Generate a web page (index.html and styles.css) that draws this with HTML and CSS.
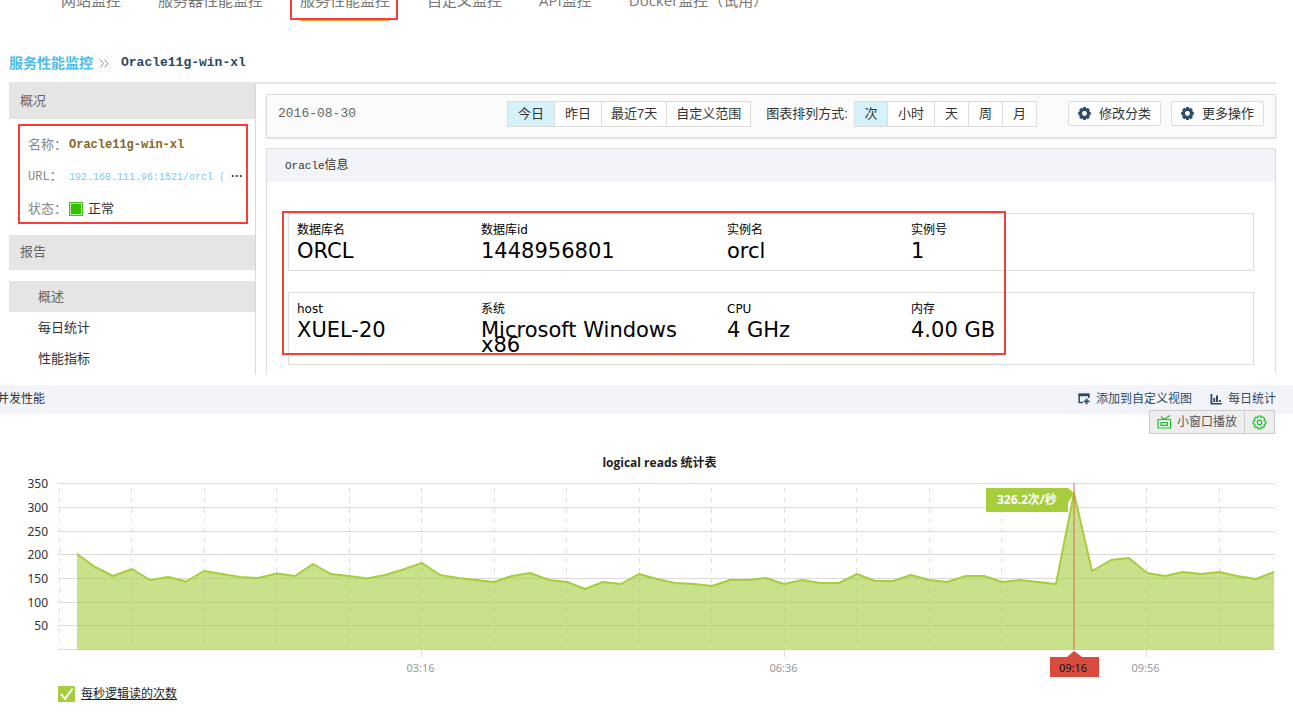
FILE: index.html
```
<!DOCTYPE html>
<html lang="zh-CN">
<head>
<meta charset="utf-8">
<title>服务性能监控</title>
<link rel="stylesheet" href="styles.css">
</head>
<body>
<svg class="defs" width="0" height="0" aria-hidden="true">
  <symbol id="gear" viewBox="0 0 12 12">
    <path fill-rule="evenodd" d="M4.8 0h2.4l.4 1.600 1.500-.8 1.900 1.900-.8 1.500 1.600.5v2.600l-1.600.5.8 1.500-1.900 1.900-1.500-.8-.4 1.600H4.800l-.4-1.600-1.500.8L1 9.300l.8-1.500L.2 7.300V4.700l1.600-.5L1 2.700 2.900.8l1.500.8zM6 3.700a2.300 2.300 0 1 0 0 4.600 2.300 2.300 0 0 0 0-4.600z"/>
  </symbol>
</svg>
<header>
  <nav class="topnav">
    <a href="#">网站监控</a>
    <a href="#">服务器性能监控</a>
    <a href="#" class="current">服务性能监控</a>
    <a href="#">自定义监控</a>
    <a href="#">API监控</a>
    <a href="#">Docker监控（试用）</a>
  </nav>
  <div class="crumbs">
    <a href="#">服务性能监控</a>
    <svg width="10" height="9" viewBox="0 0 10 9"><path d="M1 .5l3.500 4L1 8.500M5.500.5l3.500 4-3.500 4" fill="none" stroke="#7d93ab"/></svg>
    <h1 class="mono">Oracle11g-win-xl</h1>
  </div>
</header>

<div class="layout">
  <aside class="side">
    <h2>概况</h2>
    <dl class="info">
      <dt>名称：</dt><dd class="name mono">Oracle11g-win-xl</dd>
      <dt><span class="mono">URL</span>：</dt><dd class="url mono"><a href="#">192.168.111.96:1521/orcl (</a><b>···</b></dd>
      <dt>状态：</dt><dd class="state"><i></i>正常</dd>
    </dl>
    <h2>报告</h2>
    <nav class="menu">
      <a href="#" class="on">概述</a>
      <a href="#">每日统计</a>
      <a href="#">性能指标</a>
    </nav>
  </aside>

  <main class="main">
    <div class="toolbar">
      <span class="date mono">2016-08-30</span>
      <div class="seg range">
        <button class="on">今日</button><button>昨日</button><button>最近7天</button><button>自定义范围</button>
      </div>
      <span class="seg-label">图表排列方式:</span>
      <div class="seg unit">
        <button class="on">次</button><button>小时</button><button>天</button><button>周</button><button>月</button>
      </div>
      <div class="actions">
        <button><svg width="13" height="13"><use href="#gear"/></svg>修改分类</button>
        <button><svg width="13" height="13"><use href="#gear"/></svg>更多操作</button>
      </div>
    </div>
    <section class="panel">
      <h2><span class="mono">Oracle</span>信息</h2>
      <div class="cards">
        <dl class="card">
          <div><dt>数据库名</dt><dd>ORCL</dd></div>
          <div><dt>数据库id</dt><dd>1448956801</dd></div>
          <div><dt>实例名</dt><dd>orcl</dd></div>
          <div><dt>实例号</dt><dd>1</dd></div>
        </dl>
        <dl class="card">
          <div><dt>host</dt><dd>XUEL-20</dd></div>
          <div><dt>系统</dt><dd>Microsoft Windows x86</dd></div>
          <div><dt>CPU</dt><dd>4 GHz</dd></div>
          <div><dt>内存</dt><dd>4.00 GB</dd></div>
        </dl>
      </div>
    </section>
  </main>
</div>

<section class="perf">
  <div class="bar">
    <h2>并发性能</h2>
    <div class="links">
      <a href="#"><svg width="12" height="12" viewBox="0 0 12 12"><path d="M5 9.500H1.200V1.500h9.600V5" fill="none" stroke="currentColor" stroke-width="1.500"/><path d="M.5.5h11v2.800H.5zM7.700 5.500h1.800v2h2v1.800h-2v2H7.700v-2h-2V7.500h2z" fill="currentColor"/></svg>添加到自定义视图</a>
      <a href="#"><svg width="12" height="12" viewBox="0 0 12 12"><path d="M.5 1h1.800v9h9.500v1.500H.5zM3.300 5h1.900v4H3.300zM6 2.500h2v6.500H6zM8.900 7h1.900v2H8.900z" fill="currentColor"/></svg>每日统计</a>
    </div>
  </div>
  <div class="play">
    <button><svg width="15" height="14" viewBox="0 0 15 14"><path d="M1 4.500h12.500v8.500H1zM4 7.500h6.500v2.800H4zM4 1.500l3 3 6-4" fill="none" stroke="#1fc32f" stroke-width="1.200"/></svg>小窗口播放</button>
    <button aria-label="设置"><svg width="15" height="15" viewBox="0 0 15 15"><g fill="none" stroke="#1fc32f" stroke-width="1.200"><path d="M6.200 1h2.600l.5 1.700 1.600-.8 1.900 1.900-.8 1.600 1.800.7v2.600l-1.800.6.8 1.700-1.900 1.800-1.600-.8-.5 1.800H6.200l-.6-1.800-1.600.8L2.200 11l.8-1.700-1.800-.6V6.100L3 5.400l-.8-1.600L4 1.900l1.600.8z"/><circle cx="7.500" cy="7.400" r="2.200"/></g></svg></button>
  </div>
  <h3>logical reads 统计表</h3>
  <svg class="chart" viewBox="0 475 1293 205" role="img" aria-label="logical reads 统计表">
    <g id="grid"></g>
    <path id="area"/>
    <polyline id="line"/>
    <path class="cursor" d="M1074 483v167"/>
    <path class="tip" d="M986 488h82l6 5-6 10v9h-82z"/>
    <text class="tip-text" x="997" y="504">326.2次/秒</text>
    <path class="flag" d="M1050 657h17l7-6 8 6h17v20h-49z"/>
    <text class="flag-text" x="1073" y="672">09:16</text>
  </svg>
  <label class="legend"><input type="checkbox" checked><span>每秒逻辑读的次数</span></label>
</section>
<script src="chart.js"></script>
</body>
</html>
```
FILE: styles.css
```
* { box-sizing: border-box; }
body {
  margin: 0;
  overflow-x: hidden;
  background: #fff;
  color: #333;
  font: 13px/20px "Liberation Sans", "Noto Sans CJK SC", sans-serif;
}
h1, h2, h3, dl, dd { margin: 0; }
h1, h2 { font-weight: normal; }
a { color: inherit; text-decoration: none; }
button { font: inherit; color: inherit; margin: 0; cursor: pointer; }
svg { flex: none; }
.defs { position: absolute; }
.mono { font-family: "Liberation Mono", "Noto Sans CJK SC", monospace; }

.topnav {
  display: flex;
  gap: 37px;
  height: 20px;
  padding-left: 61px;
  color: #777;
  font: 15px/24px "Open Sans", "Noto Sans CJK SC", sans-serif;
  white-space: nowrap;
}
.topnav a { height: 33px; margin-top: -12px; }
.topnav .current { position: relative; border-bottom: 2px solid #f7a73e; }
.topnav .current::after {
  content: "";
  position: absolute;
  inset: 0 -8px -1px -10px;
  border: 2px solid #f83c3c;
}

.crumbs {
  display: flex;
  align-items: center;
  gap: 6px;
  height: 62px;
  padding: 24px 9px 0;
}
.crumbs a { color: #4cbde8; font-size: 14px; font-weight: bold; }
.crumbs h1 { margin-left: 6px; color: #2b4665; font-size: 13px; font-weight: bold; }

.layout {
  display: flex;
  margin: 0 17px 0 9px;
  border-top: 2px solid #e6e6e6;
}
.side { width: 247px; border-right: 1px solid #d8d8d8; flex: none; }
.side h2 { padding: 7px 11px 8px; background: #e5e5e5; color: #666; font-size: 13px; }
.info {
  display: grid;
  grid-template-columns: 41px 1fr;
  row-gap: 11px;
  margin: 5px 7px 11px 9px;
  padding: 9px 0 3px 8px;
  border: 2px solid #f83c3c;
  white-space: nowrap;
}
.info dt { color: #888; font-size: 13px; }
.info dt .mono { font-size: 12px; }
.name { color: #866422; font-size: 12px; font-weight: bold; }
.url { color: #7cc9ec; font-size: 10px; }
.url b { margin-left: 6px; color: #333; font-size: 12px; font-family: "Liberation Sans", sans-serif; }
.state { display: flex; align-items: center; gap: 5px; }
.state i {
  width: 14px;
  height: 14px;
  border: 1px solid #3ec415;
  background: #36bf00;
  box-shadow: inset 0 0 0 1px #b9efa6;
}
.menu { padding-top: 11px; }
.menu a { display: block; padding: 6px 29px 5px; }
.menu .on { background: #e5e5e5; color: #666; }

.main { flex: 1; min-width: 0; padding: 10px 0 0 10px; }
.toolbar {
  display: flex;
  align-items: flex-start;
  height: 44px;
  padding: 6px 11px;
  border: 1px solid #dcdcdc;
  background: #fbfbfb;
  box-shadow: 0 1px 2px #ddd;
  white-space: nowrap;
}
.date { margin-right: auto; padding-top: 3px; color: #666; }
.seg { display: flex; }
.seg button {
  height: 26px;
  padding: 0;
  border: 1px solid #dcdcdc;
  border-left-width: 0;
  background: #fff;
  flex: none;
}
.seg button:first-child { border-left-width: 1px; }
.seg .on { background: #d5f1fa; }
.range button { padding: 0 9px; }
.range button:nth-child(-n+2) { padding: 0 10px; }
.unit button { width: 34px; }
.unit button:nth-child(2) { width: 47px; }
.seg-label { padding: 3px 6px 0 15px; }
.actions { display: flex; gap: 10px; margin-left: 31px; }
.actions button {
  display: flex;
  align-items: center;
  gap: 8px;
  height: 25px;
  padding: 0 9px;
  border: 1px solid #dcdcdc;
  border-radius: 2px;
  background: #fff;
}
.actions svg { fill: #2c4a66; }

.panel { margin-top: 10px; border: 1px solid #dcdcdc; border-bottom: 0; }
.panel h2 { padding: 6px 18px; background: #f3f4f9; font-size: 12px; }
.panel .mono { font-size: 11px; }
.cards {
  position: relative;
  display: grid;
  gap: 21px;
  padding: 31px 21px 9px;
  color: #000;
  font-family: "DejaVu Sans", "Noto Sans CJK SC", sans-serif;
}
.cards::after {
  content: "";
  position: absolute;
  inset: 29px 269px 19px 15px;
  border: 2px solid #f83c3c;
  pointer-events: none;
}
.card {
  display: grid;
  grid-template-columns: 184px 246px 184px 1fr;
  padding: 6px 8px 11px;
  border: 1px solid #ddd;
}
.card dt { font-size: 12px; }
.card dd { padding: 4px 30px 0 0; font-size: 21px; line-height: 15px; }
.card div:last-child dd { padding-right: 0; }

.perf { margin-top: 11px; font-size: 12px; }
.bar {
  display: flex;
  justify-content: space-between;
  padding: 4px 17px 5px 0;
  background: #f3f4f9;
}
.bar h2 { margin-left: -3px; font-size: 12px; }
.links { display: flex; gap: 18px; color: #2c4a66; }
.links a { display: flex; align-items: center; gap: 6px; }
.play {
  position: relative;
  display: flex;
  justify-content: flex-end;
  margin: -4px 18px 0 0;
}
.play button {
  display: flex;
  align-items: center;
  gap: 5px;
  height: 24px;
  padding: 0 7px;
  border: 1px solid #ccc;
  background: #eee;
  color: #555;
}
.play button + button { border-left-width: 0; }
.perf h3 {
  margin: 19px 0 2px;
  padding-left: 26px;
  color: #222;
  font: bold 12px/20px "Open Sans", "Noto Sans CJK SC", sans-serif;
  text-align: center;
}
.chart {
  display: block;
  width: 100%;
  font-family: "Noto Sans", "Noto Sans CJK SC", sans-serif;
  font-size: 12px;
}
.row { stroke: #d9d9d9; }
.col { stroke: #e0e0e0; stroke-dasharray: 5 5; }
.tick { stroke: #ddd; }
.y-label { fill: #333; text-anchor: end; }
.x-label { fill: #999; font-size: 11px; text-anchor: middle; }
#area { fill: #a6cd3d; fill-opacity: .6; }
#line { fill: none; stroke: #a6cd3d; stroke-width: 2; stroke-linejoin: round; }
.cursor { stroke: #e0604c; stroke-opacity: .45; stroke-width: 2; }
.tip { fill: #a6cd3d; }
.tip-text { fill: #fff; font-weight: bold; }
.flag { fill: #d94c3d; }
.flag-text { fill: #111; font-size: 11px; text-anchor: middle; }
.legend {
  display: inline-flex;
  align-items: center;
  gap: 6px;
  margin: 4px 0 8px 58px;
  color: #222;
  text-decoration: underline;
}
.legend input {
  appearance: none;
  width: 17px;
  height: 16px;
  margin: 0;
  border-radius: 1px;
  background: #a6cd3d;
}
.legend input:checked::before {
  content: "";
  display: block;
  height: 16px;
  background: #fff;
  clip-path: polygon(12% 52%, 22% 46%, 40% 70%, 82% 12%, 90% 18%, 42% 90%);
}
```
FILE: chart.js
```
const left = 59, step = 18.13, right = 1275, base = 649.5;
const points = [
  554, 567, 576, 569, 580, 577, 581.5, 571, 574, 577, 578, 573.5, 576, 564, 574,
  576, 578.5, 575, 569.5, 563, 575, 578, 580, 582, 576, 573, 580, 582, 589, 582,
  584, 574, 579, 583, 584, 586, 580, 580, 578, 584, 580, 583, 583, 574, 581, 581,
  575, 580, 582, 576, 576, 582, 580, 582, 584, 493, 571, 560, 558, 573, 576, 572,
  574, 572, 576, 579, 572
];

let grid = "";
for (let i = 0; i <= 7; i++) {
  const y = Math.floor(base - i * 23.7) + 0.5;
  grid += `<path class="row" d="M${left - 1} ${y}H${right}"/>`;
  if (i > 0) grid += `<text class="y-label" x="48" y="${y + 4}">${i * 50}</text>`;
}
for (let i = 0; i <= 16; i++) {
  const x = Math.floor(left + i * 4 * step) + 0.5;
  grid += `<path class="col" d="M${x} 488V${base}"/>`;
}
for (const [i, label] of [[20, "03:16"], [40, "06:36"], [60, "09:56"]]) {
  const x = Math.floor(left + i * step) + 0.5;
  grid += `<path class="tick" d="M${x} 650v7"/><text class="x-label" x="${x - 1}" y="672">${label}</text>`;
}
document.getElementById("grid").innerHTML = grid;

const xy = points.map((y, k) => `${Math.min(right, Math.round(left + (k + 1) * step))} ${y}`);
document.getElementById("line").setAttribute("points", xy.join(" "));
document.getElementById("area").setAttribute("d", `M${left + 18} ${base}L${xy.join("L")}V${base}Z`);
```
